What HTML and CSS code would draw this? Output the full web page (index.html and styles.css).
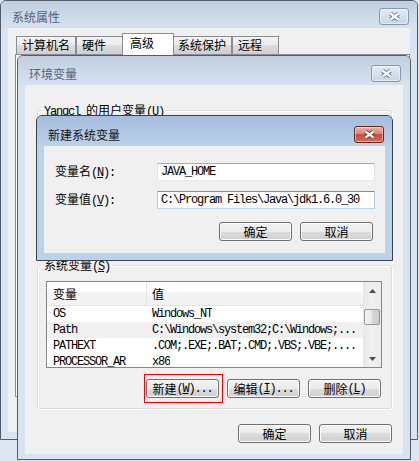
FILE: index.html
```html
<!DOCTYPE html>
<html>
<head>
<meta charset="utf-8">
<title>系统属性</title>
<link rel="stylesheet" href="styles.css">
</head>
<body>
<div class="desk">

  <div class="win win-sys">
    <div class="tbar">
      <span class="ttl">系统属性</span>
      <span class="close"><svg width="13" height="9" viewBox="0 0 13 9"><path d="M2.5 1.5 10.5 7.5M10.5 1.5 2.5 7.5" stroke="#6b768a" stroke-width="4.2"/><path d="M2.5 1.5 10.5 7.5M10.5 1.5 2.5 7.5" stroke="#fff" stroke-width="2.2"/></svg></span>
    </div>
    <div class="wbody">
      <div class="client sys-client">
        <div class="tabs">
          <span class="tab t1">计算机名</span>
          <span class="tab t2">硬件</span>
          <span class="tab sel t3">高级</span>
          <span class="tab t4">系统保护</span>
          <span class="tab t5">远程</span>
        </div>
        <div class="tabpanel"></div>
      </div>
    </div>
  </div>

  <div class="win win-env">
    <div class="tbar">
      <span class="ttl">环境变量</span>
      <span class="close"><svg width="13" height="9" viewBox="0 0 13 9"><path d="M2.5 1.5 10.5 7.5M10.5 1.5 2.5 7.5" stroke="#6b768a" stroke-width="4.2"/><path d="M2.5 1.5 10.5 7.5M10.5 1.5 2.5 7.5" stroke="#fff" stroke-width="2.2"/></svg></span>
    </div>
    <div class="wbody">
      <div class="client env-client">
        <div class="group g1">
          <span class="legend"><span class="m">Yangcl </span>的用户变量<span class="m">(<u>U</u>)</span></span>
        </div>
        <div class="group g2">
          <span class="legend">系统变量<span class="m">(<u>S</u>)</span></span>
          <div class="list">
            <div class="lv">
              <div class="lv-head">
                <span class="hc1">变量</span>
                <span class="hc2">值</span>
              </div>
              <div class="rows m">
                <div class="row"><span class="c1">OS</span><span class="c2">Windows_NT</span></div>
                <div class="row hl"><span class="c1">Path</span><span class="c2">C:\Windows\system32;C:\Windows;...</span></div>
                <div class="row"><span class="c1">PATHEXT</span><span class="c2">.COM;.EXE;.BAT;.CMD;.VBS;.VBE;....</span></div>
                <div class="row"><span class="c1">PROCESSOR_AR</span><span class="c2">x86</span></div>
              </div>
            </div>
            <div class="sb">
              <span class="sb-btn"><svg width="7" height="4" viewBox="0 0 7 4"><path d="M0 4 3.5 0 7 4Z" fill="#4d4d4d"/></svg></span>
              <span class="thumb"></span>
              <span class="sb-btn sb-down"><svg width="7" height="4" viewBox="0 0 7 4"><path d="M0 0 3.5 4 7 0Z" fill="#4d4d4d"/></svg></span>
            </div>
          </div>
          <div class="btnrow grow">
            <span class="mark"><span class="btn">新建<span class="m">(<u>W</u>)...</span></span></span>
            <span class="btn">编辑<span class="m">(<u>I</u>)...</span></span>
            <span class="btn">删除<span class="m">(<u>L</u>)</span></span>
          </div>
        </div>
        <div class="btnrow bottom">
          <span class="btn">确定</span>
          <span class="btn">取消</span>
        </div>
      </div>
    </div>
  </div>

  <div class="win win-new active">
    <div class="tbar">
      <span class="ttl">新建系统变量</span>
      <span class="close red"><svg width="13" height="9" viewBox="0 0 13 9"><path d="M2.5 1.5 10.5 7.5M10.5 1.5 2.5 7.5" stroke="#7a3328" stroke-width="4.2"/><path d="M2.5 1.5 10.5 7.5M10.5 1.5 2.5 7.5" stroke="#fff" stroke-width="2.2"/></svg></span>
    </div>
    <div class="wbody">
      <div class="client new-client">
        <div class="frow">
          <span class="flabel">变量名<span class="m">(<u>N</u>):</span></span>
          <span class="inp m">JAVA_HOME</span>
        </div>
        <div class="frow">
          <span class="flabel">变量值<span class="m">(<u>V</u>):</span></span>
          <span class="inp focus m">C:\Program Files\Java\jdk1.6.0_30</span>
        </div>
        <div class="btnrow nbtns">
          <span class="btn">确定</span>
          <span class="btn">取消</span>
        </div>
      </div>
    </div>
  </div>

</div>
</body>
</html>
```

FILE: styles.css
```css
* { box-sizing: border-box; }
html, body { margin: 0; padding: 0; }
body {
  width: 419px;
  height: 461px;
  overflow: hidden;
  background: #dde7f3;
  font-family: "Noto Sans CJK SC", sans-serif;
  font-size: 12px;
  line-height: 14px;
  color: #000;
}
.desk { position: relative; width: 419px; height: 461px; }

.m {
  font-family: "Liberation Mono", monospace;
  font-size: 12px;
  letter-spacing: -1.2px;
}
u { text-decoration: underline; text-underline-offset: 1px; }

/* windows */
.win {
  position: absolute;
  border: 1px solid #545c68;
  border-radius: 6px 6px 0 0;
  display: flex;
  flex-direction: column;
  overflow: hidden;
  background: #d9e4f1;
}
.win.active { border-color: #3a424e; background: #bcd2ea; }
.tbar {
  flex: none;
  display: flex;
  align-items: flex-start;
  background: linear-gradient(#bfcee0, #d7e2ef);
}
.active .tbar { background: linear-gradient(#a4bddb, #bcd2ea); }
.ttl { line-height: 12px; color: #56637a; white-space: nowrap; }
.active .ttl { color: #111; }
.close {
  margin-left: auto;
  width: 30px;
  height: 17px;
  border: 1px solid #8797b0;
  border-radius: 3px;
  background: linear-gradient(#e3eaf4, #c9d6e6);
  box-shadow: inset 0 0 0 1px rgba(255,255,255,0.45);
  display: flex;
  align-items: center;
  justify-content: center;
}
.close.red {
  border-color: #6e2419;
  background: linear-gradient(#eab3a7 0%, #d88676 45%, #c44f3b 50%, #d36d56 100%);
}
.wbody { flex: 1; display: flex; padding: 0 7px 7px; }
.client { flex: 1; background: #f0f0f0; }

/* system properties */
.win-sys { left: 0; top: 0; width: 418px; height: 440px; }
.win-sys .tbar { height: 27px; padding-left: 11px; }
.win-sys .ttl { margin-top: 10px; }
.win-sys .close { margin-top: 7px; margin-right: 8px; }
.sys-client { padding: 5px 0 0 7px; }
.tabs {
  display: flex;
  align-items: flex-end;
  height: 21px;
  margin-left: 1px;
}
.tab {
  flex: none;
  height: 18px;
  border: 1px solid #898c95;
  border-bottom: none;
  background: linear-gradient(#f3f3f3 0%, #ebebeb 50%, #dddddd 50%, #cfcfcf 100%);
  padding-left: 5px;
  line-height: 16px;
  white-space: nowrap;
  overflow: hidden;
}
.tab.sel {
  height: 22px;
  margin: 0 -2px -1px;
  background: #fff;
  position: relative;
  z-index: 2;
  padding-left: 7px;
  line-height: 18px;
}
.t1 { width: 60px; }
.t2 { width: 48px; }
.t3 { width: 52px; }
.t4 { width: 60px; }
.t5 { width: 47px; }
.tabpanel {
  height: 343px;
  width: 395px;
  border: 1px solid #898c95;
  background: #fff;
}

/* environment variables */
.win-env { left: 17px; top: 55px; width: 394px; height: 405px; }
.win-env .tbar { height: 29px; padding-left: 11px; }
.win-env .ttl { margin-top: 12px; }
.win-env .close { margin-top: 9px; margin-right: 9px; }
.env-client {
  display: flex;
  flex-direction: column;
  padding: 25px 11px 11px 12px;
}
.group {
  border: 1px solid #d5dfe5;
  border-radius: 3px;
  box-shadow: inset 1px 1px 0 #fff, 1px 1px 0 #fff;
}
.legend {
  display: block;
  width: max-content;
  margin: -8px 0 0 4px;
  padding: 0 2px;
  background: #f0f0f0;
  line-height: 14px;
  white-space: nowrap;
}
.g1 { height: 140px; margin-bottom: 15px; }
.g2 { padding: 0 9px 10px 8px; }
.g2 .legend { margin-left: -4px; }

.list {
  margin-top: 7px;
  height: 87px;
  border: 1px solid #828790;
  background: #fff;
  display: flex;
  overflow: hidden;
}
.lv { flex: 1; min-width: 0; }
.lv-head {
  display: flex;
  height: 24px;
  line-height: 24px;
  background: linear-gradient(#ffffff 0%, #ffffff 42%, #f4f5f7 42%, #f1f2f4 100%);
  border-bottom: 1px solid #e3e5e9;
}
.hc1 { width: 100px; padding-left: 6px; border-right: 1px solid #e3e5e9; }
.hc2 { padding-left: 5px; }
.row { display: flex; height: 16px; line-height: 16px; white-space: nowrap; }
.row.hl { background: #f0f0f0; }
.c1 { width: 100px; flex: none; padding-left: 6px; overflow: hidden; }
.c2 { padding-left: 5px; overflow: hidden; }

.sb {
  width: 18px;
  flex: none;
  background: linear-gradient(90deg, #e6e6e6, #f0f0f0 40%, #ececec);
  display: flex;
  flex-direction: column;
  align-items: center;
}
.sb-btn {
  height: 17px;
  width: 100%;
  display: flex;
  align-items: center;
  justify-content: center;
}
.sb-down { margin-top: auto; }
.thumb {
  margin-top: 10px;
  width: 16px;
  height: 16px;
  border: 1px solid #959595;
  border-radius: 2px;
  background: linear-gradient(90deg, #f4f4f4, #e6e6e6 50%, #d6d6d6 51%, #cdcdcd);
}

.btnrow { display: flex; justify-content: flex-end; align-items: flex-start; gap: 8px; }
.grow { margin-top: 11px; margin-right: 1px; }
.bottom { margin-top: 15px; }
.btn {
  flex: none;
  width: 73px;
  height: 19px;
  border: 1px solid #707070;
  border-radius: 3px;
  background: linear-gradient(#f2f2f2 0%, #ebebeb 50%, #dddddd 50%, #cfcfcf 100%);
  box-shadow: inset 0 0 0 1px #fbfbfb;
  display: flex;
  align-items: center;
  justify-content: center;
  line-height: 14px;
  white-space: nowrap;
}
.mark {
  flex: none;
  display: flex;
  margin: -5px -4px -5px -2px;
  padding: 4px 3px 4px 1px;
  border: 1px solid #ff0000;
}

/* new system variable */
.win-new { left: 36px; top: 115px; width: 357px; height: 146px; }
.win-new .tbar { height: 30px; padding-left: 11px; }
.win-new .ttl { margin-top: 13px; }
.win-new .close { margin-top: 10px; margin-right: 8px; }
.new-client { padding: 17px 10px 12px 11px; }
.frow { display: flex; align-items: center; height: 18px; }
.frow + .frow { margin-top: 10px; }
.flabel { width: 102px; flex: none; white-space: nowrap; }
.inp {
  width: 218px;
  height: 18px;
  border: 1px solid;
  border-color: #abadb3 #dbdfe6 #e3e9ef #e2e3ea;
  background: #fff;
  padding-left: 3px;
  line-height: 16px;
  white-space: nowrap;
  overflow: hidden;
}
.inp.focus { border-color: #5a98d0 #a8cbe9 #b8d8f0 #a8cbe9; }
.nbtns { margin-top: 13px; margin-right: 2px; }
```
